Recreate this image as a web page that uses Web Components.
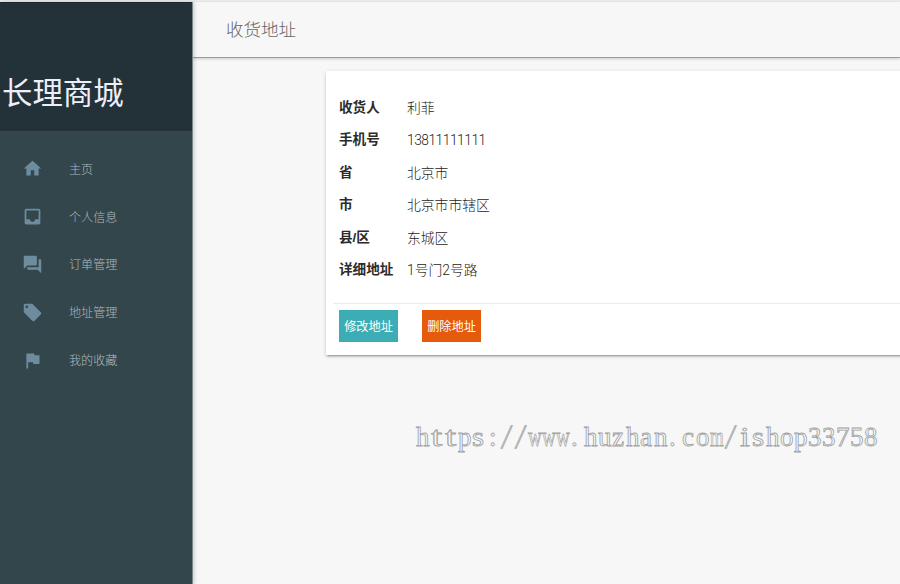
<!DOCTYPE html>
<html lang="zh-CN">
<head>
<meta charset="utf-8">
<title>收货地址</title>
<style>
  html, body { height: 100%; margin: 0; overflow: hidden; }
  body {
    background: #f7f7f7;
    font-family: "Liberation Sans", "Noto Sans CJK SC", sans-serif;
  }
</style>
</head>
<body>
<shop-layout>
  <side-nav slot="nav" brand="长理商城">
    <nav-item icon="home">主页</nav-item>
    <nav-item icon="inbox">个人信息</nav-item>
    <nav-item icon="forum">订单管理</nav-item>
    <nav-item icon="label">地址管理</nav-item>
    <nav-item icon="flag">我的收藏</nav-item>
  </side-nav>
  <page-header slot="header">收货地址</page-header>
  <address-card>
    <address-row label="收货人">利菲</address-row>
    <address-row label="手机号" numeric>13811111111</address-row>
    <address-row label="省">北京市</address-row>
    <address-row label="市">北京市市辖区</address-row>
    <address-row label="县/区">东城区</address-row>
    <address-row label="详细地址">1号门2号路</address-row>
    <action-button slot="actions">修改地址</action-button>
    <action-button slot="actions" kind="danger">删除地址</action-button>
  </address-card>
  <water-mark slot="overlay"></water-mark>
</shop-layout>

<script>
class ShopLayout extends HTMLElement {
  static get style() {
    return /*css*/`
      :host {
        display: grid;
        grid-template-columns: 193px 1fr;
        height: 100vh;
        box-sizing: border-box;
        border-top: 2px solid #ececec;
        position: relative;
      }
      .main {
        display: flex;
        flex-direction: column;
        min-width: 0;
      }
      .content {
        padding: 13px 0 0 133px;
      }
    `
  }
  constructor() {
    super();
    this.attachShadow({ mode: 'open' })
    this.shadowRoot.innerHTML = /*html*/`
      <style>${ShopLayout.style}</style>
      <slot name="nav"></slot>
      <div class="main">
        <slot name="header"></slot>
        <div class="content"><slot></slot></div>
      </div>
      <slot name="overlay"></slot>
    `
  }
}

class SideNav extends HTMLElement {
  static get style() {
    return /*css*/`
      :host {
        display: flex;
        flex-direction: column;
        background: #33464c;
        box-sizing: border-box;
        border-right: 1px solid #7d898d;
        box-shadow: 1px 0 4px rgba(0, 0, 0, .2);
        z-index: 1;
      }
      .brand {
        display: flex;
        align-items: flex-end;
        box-sizing: border-box;
        height: 129px;
        padding: 0 0 16px 2px;
        background: #233138;
        border-top: 1px solid #1b282e;
        color: #eceff8;
        font-size: 30.4px;
        font-weight: 400;
        line-height: 44px;
      }
      nav {
        display: flex;
        flex-direction: column;
        padding-top: 14px;
      }
    `
  }
  constructor() {
    super();
    this.attachShadow({ mode: 'open' })
    this.shadowRoot.innerHTML = /*html*/`
      <style>${SideNav.style}</style>
      <div class="brand">${this.getAttribute('brand')}</div>
      <nav><slot></slot></nav>
    `
  }
}

const icons = {
  home: 'M10 20v-6h4v6h5v-8h3L12 3 2 12h3v8z',
  inbox: 'M19 3H4.99c-1.1 0-1.98.9-1.98 2L3 19c0 1.1.89 2 1.99 2H19c1.1 0 2-.9 2-2V5c0-1.1-.9-2-2-2zm0 12h-4c0 1.66-1.34 3-3 3s-3-1.34-3-3H4.99V5H19v10z',
  forum: 'M21 6h-2v9H6v2c0 .55.45 1 1 1h11l4 4V7c0-.55-.45-1-1-1zm-4 6V3c0-.55-.45-1-1-1H3c-.55 0-1 .45-1 1v14l4-4h10c.55 0 1-.45 1-1z',
  label: 'M21.41 11.58l-9-9C12.05 2.22 11.55 2 11 2H4c-1.1 0-2 .9-2 2v7c0 .55.22 1.05.59 1.42l9 9c.36.36.86.58 1.41.58.55 0 1.05-.22 1.41-.59l7-7c.37-.36.59-.86.59-1.41 0-.55-.23-1.06-.59-1.42zM5.5 7C4.67 7 4 6.33 4 5.5S4.67 4 5.5 4 7 4.67 7 5.5 6.33 7 5.5 7z',
  flag: 'M14.4 6L14 4H5v17h2v-7h5.6l.4 2h7V6z'
}

class NavItem extends HTMLElement {
  static get style() {
    return /*css*/`
      :host {
        display: flex;
        align-items: center;
        height: 47.85px;
        padding-left: 22px;
        gap: 26px;
        color: #b0babe;
        font-size: 12.1px;
        font-weight: 300;
      }
      svg {
        width: 21px;
        height: 21px;
        fill: #6d8c9d;
      }
      span { padding-bottom: 1.5px; }
    `
  }
  constructor() {
    super();
    this.attachShadow({ mode: 'open' })
    this.shadowRoot.innerHTML = /*html*/`
      <style>${NavItem.style}</style>
      <svg viewBox="0 0 24 24" aria-hidden="true"><path d="${icons[this.getAttribute('icon')]}"/></svg>
      <span><slot></slot></span>
    `
  }
}

class PageHeader extends HTMLElement {
  static get style() {
    return /*css*/`
      :host {
        display: flex;
        align-items: center;
        box-sizing: border-box;
        height: 56px;
        padding: 0 0 2px 33px;
        border-bottom: 1px solid #999e9e;
        box-shadow: 0 1px 3px rgba(0, 0, 0, .18);
        color: #666;
        font-size: 17.5px;
        font-weight: 300;
      }
    `
  }
  constructor() {
    super();
    this.attachShadow({ mode: 'open' })
    this.shadowRoot.innerHTML = /*html*/`
      <style>${PageHeader.style}</style>
      <span><slot></slot></span>
    `
  }
}

class AddressCard extends HTMLElement {
  static get style() {
    return /*css*/`
      :host {
        display: block;
        box-sizing: border-box;
        height: 284px;
        margin-right: -10px;
        padding: 20px 0 0 7px;
        background: #fff;
        box-shadow: 0 2px 2px -1px rgba(0, 0, 0, .36), 0 1px 4px rgba(0, 0, 0, .16);
      }
      .rows {
        display: flex;
        flex-direction: column;
        box-sizing: border-box;
        height: 213px;
        padding: .5px 0 0 6px;
        border-bottom: 1px solid #ebebeb;
      }
      .actions {
        display: flex;
        gap: 24px;
        padding: 6px 0 0 6px;
      }
    `
  }
  constructor() {
    super();
    this.attachShadow({ mode: 'open' })
    this.shadowRoot.innerHTML = /*html*/`
      <style>${AddressCard.style}</style>
      <div class="rows"><slot></slot></div>
      <div class="actions"><slot name="actions"></slot></div>
    `
  }
}

class AddressRow extends HTMLElement {
  static get style() {
    return /*css*/`
      :host {
        display: grid;
        grid-template-columns: 68px 1fr;
        align-items: center;
        height: 32.5px;
        color: #1c1c1c;
        font-family: Roboto, "Noto Sans CJK SC", sans-serif;
        font-size: 13.8px;
        font-weight: 300;
        line-height: 20px;
      }
      :host([numeric]) span { letter-spacing: -.5px; }
      b {
        color: #2b2b2b;
        font-family: "Liberation Sans", "Noto Sans CJK SC", sans-serif;
        font-size: 13.6px;
        font-weight: 700;
      }
    `
  }
  constructor() {
    super();
    this.attachShadow({ mode: 'open' })
    this.shadowRoot.innerHTML = /*html*/`
      <style>${AddressRow.style}</style>
      <b>${this.getAttribute('label')}</b>
      <span><slot></slot></span>
    `
  }
}

class ActionButton extends HTMLElement {
  static get style() {
    return /*css*/`
      :host {
        display: inline-flex;
        align-items: center;
        justify-content: center;
        width: 59px;
        height: 32px;
        background: #3cadb4;
        color: #fff;
        font-size: 12.2px;
        cursor: pointer;
      }
      :host([kind="danger"]) {
        background: #e65a0c;
      }
    `
  }
  constructor() {
    super();
    this.attachShadow({ mode: 'open' })
    this.shadowRoot.innerHTML = /*html*/`
      <style>${ActionButton.style}</style>
      <span><slot></slot></span>
    `
  }
}

// Outlined address, one 14px cell per character
class WaterMark extends HTMLElement {
  static get style() {
    return /*css*/`
      :host {
        display: flex;
        position: absolute;
        left: 416px;
        top: 418px;
        z-index: 2;
        pointer-events: none;
        color: #f7f7f7;
        font-family: "Liberation Serif", serif;
        font-size: 27px;
        line-height: 34px;
        -webkit-text-stroke: .8px #a0a0a0;
      }
      .text { white-space: nowrap; font-size: 0; }
      i {
        display: inline-block;
        width: 14px;
        font-size: 27px;
        font-style: normal;
      }
      i span {
        display: inline-block;
        transform-origin: 0 50%;
      }
    `
  }
  constructor() {
    super();
    this.attachShadow({ mode: 'open' })
    // reshape letters far from the cell width
    const shape = {
      w: 'scaleX(.7)',
      m: 'scaleX(.65)',
      t: 'scaleX(1.5)',
      i: 'scaleX(1.3)',
      s: 'scaleX(1.15)',
      '/': 'scaleY(1.25) skewX(-12deg)'
    }
    const inset = { i: 2, ':': 3, '.': 1, t: 1, '/': 3 }
    const url = 'https://www.huzhan.com/ishop33758'
    const cells = [...url].map(c =>
      `<i><span style="transform: translateX(${inset[c] || 0}px) ${shape[c] || ''}">${c}</span></i>`
    ).join('')
    this.shadowRoot.innerHTML = /*html*/`
      <style>${WaterMark.style}</style>
      <div class="text">${cells}</div>
    `
  }
}

customElements.define('shop-layout', ShopLayout)
customElements.define('side-nav', SideNav)
customElements.define('nav-item', NavItem)
customElements.define('page-header', PageHeader)
customElements.define('address-card', AddressCard)
customElements.define('address-row', AddressRow)
customElements.define('action-button', ActionButton)
customElements.define('water-mark', WaterMark)
</script>
</body>
</html>
